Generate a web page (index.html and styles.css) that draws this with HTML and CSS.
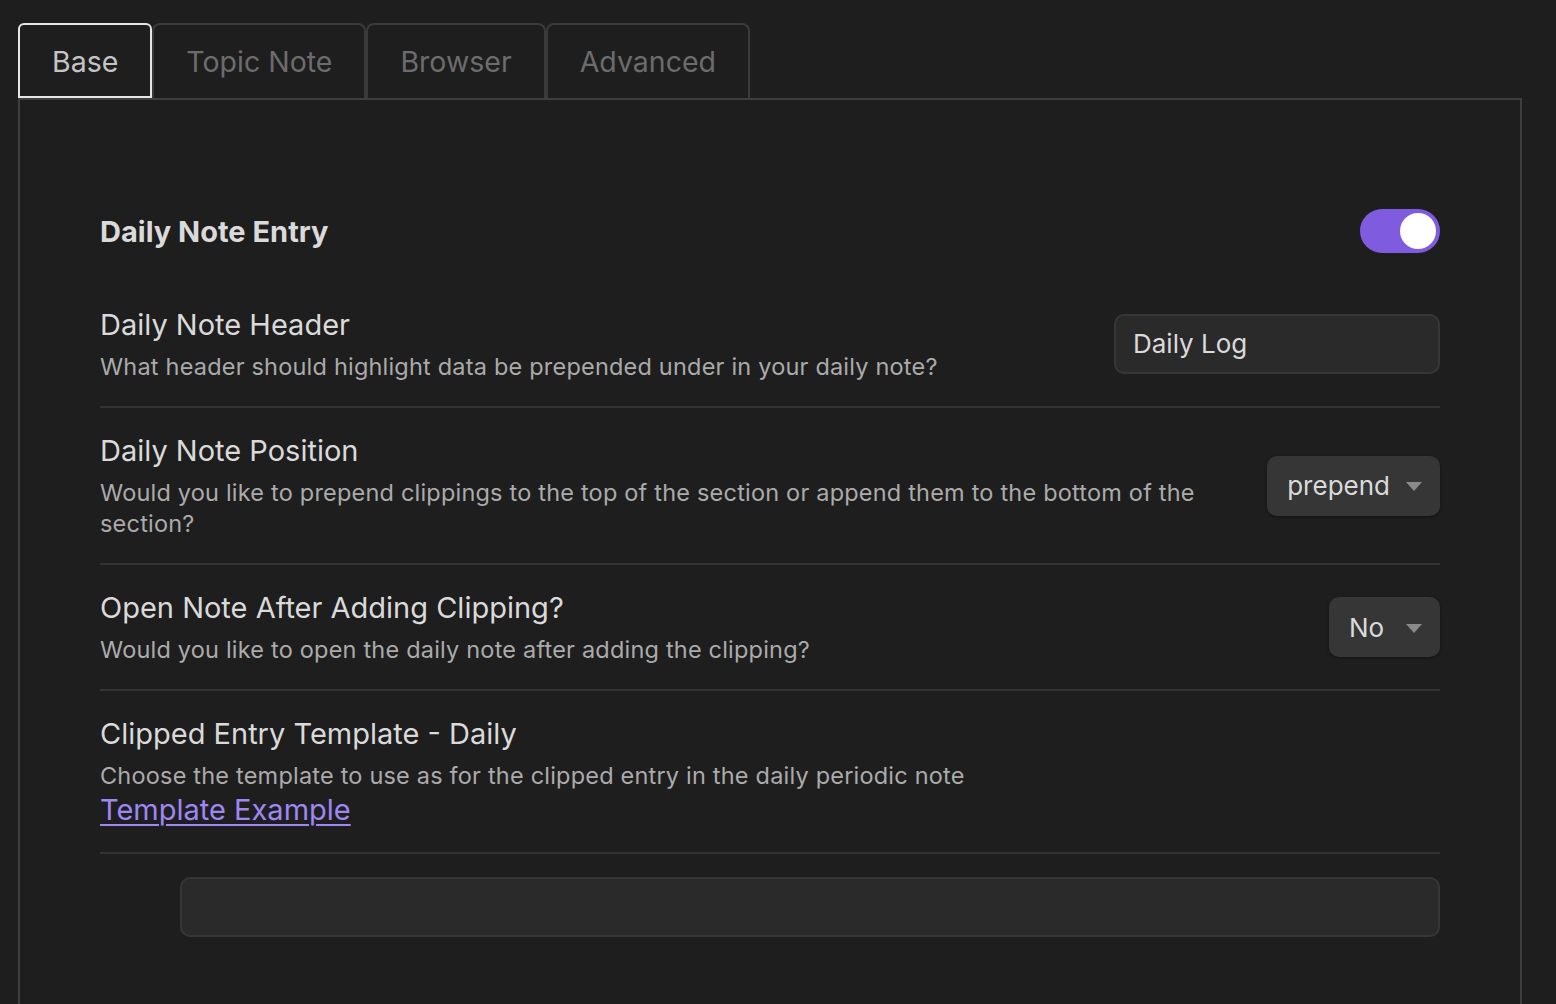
FILE: index.html
```html
<!DOCTYPE html>
<html>
<head>
<meta charset="utf-8">
<link rel="stylesheet" href="styles.css">
</head>
<body>
<div class="tabs">
  <div class="tab active">Base</div>
  <div class="tab">Topic Note</div>
  <div class="tab">Browser</div>
  <div class="tab">Advanced</div>
</div>
<div class="panel">
  <div class="heading">
    <div class="heading-name">Daily Note Entry</div>
    <div class="toggle"><div class="knob"></div></div>
  </div>
  <div class="item first">
    <div class="info">
      <div class="name">Daily Note Header</div>
      <div class="desc">What header should highlight data be prepended under in your daily note?</div>
    </div>
    <div class="input">Daily Log</div>
  </div>
  <div class="item">
    <div class="info">
      <div class="name">Daily Note Position</div>
      <div class="desc">Would you like to prepend clippings to the top of the section or append them to the bottom of the section?</div>
    </div>
    <div class="dropdown"><span class="value">prepend</span><span class="arrow"></span></div>
  </div>
  <div class="item">
    <div class="info">
      <div class="name">Open Note After Adding Clipping?</div>
      <div class="desc">Would you like to open the daily note after adding the clipping?</div>
    </div>
    <div class="dropdown"><span class="value short">No</span><span class="arrow"></span></div>
  </div>
  <div class="item">
    <div class="info">
      <div class="name">Clipped Entry Template - Daily</div>
      <div class="desc">Choose the template to use as for the clipped entry in the daily periodic note</div>
      <a class="link" href="#">Template Example</a>
    </div>
  </div>
  <div class="divider"></div>
  <div class="textarea-row"><div class="textarea"></div></div>
</div>
</body>
</html>
```
FILE: styles.css
```css
html, body {
  margin: 0;
  padding: 0;
  background: #1e1e1e;
  font-family: Inter, "Noto Sans", sans-serif;
  color: #dadada;
  overflow: hidden;
  height: 1004px;
}
.tabs {
  display: flex;
  align-items: flex-end;
  padding: 23px 0 0 18px;
  height: 98px;
  box-sizing: border-box;
}
.tab {
  height: 75px;
  box-sizing: border-box;
  border: 2px solid #3a3a3a;
  border-bottom: none;
  border-radius: 8px 8px 0 0;
  padding: 0 32px;
  font-size: 28.5px;
  line-height: 73px;
  color: #6c6c6c;
}
.tab.active {
  border: 2px solid #e6e6e6;
  border-radius: 6px 6px 0 0;
  color: #c4c4c4;
}
.panel {
  margin-left: 18px;
  width: 1504px;
  box-sizing: border-box;
  border: 2px solid #3e3e3e;
  border-bottom: none;
  height: 906px;
  padding: 109px 80px 0 80px;
}
.heading {
  display: flex;
  align-items: center;
  justify-content: space-between;
  height: 44px;
  margin-bottom: 29px;
}
.heading-name {
  font-size: 29px;
  font-weight: 700;
  color: #dadada;
}
.toggle {
  width: 80px;
  height: 44px;
  border-radius: 22px;
  background: #7f5be0;
  display: flex;
  align-items: center;
  justify-content: flex-end;
  padding: 0 4px;
  box-sizing: border-box;
}
.knob {
  width: 36px;
  height: 36px;
  border-radius: 50%;
  background: #ffffff;
}
.item {
  display: flex;
  align-items: center;
  gap: 64px;
  padding: 24px 0;
  border-top: 2px solid #333333;
}
.item.first {
  border-top: none;
}
.info {
  flex: 1;
  min-width: 0;
}
.name {
  font-size: 29px;
  line-height: 38px;
  color: #dadada;
}
.desc {
  font-size: 23.5px;
  line-height: 31px;
  margin-top: 7px;
  color: #ababab;
  letter-spacing: 0.2px;
}
.link {
  display: block;
  font-size: 29px;
  line-height: 37px;
  color: #9f86f2;
  text-decoration: underline;
  text-decoration-thickness: 2px;
  text-underline-offset: 4px;
  width: max-content;
}
.input {
  width: 326px;
  height: 60px;
  box-sizing: border-box;
  background: #2a2a2a;
  border: 2px solid #363636;
  border-radius: 10px;
  padding-left: 17px;
  font-size: 26px;
  line-height: 56px;
  color: #dadada;
}
.dropdown {
  height: 60px;
  box-sizing: border-box;
  background: #363636;
  border-radius: 10px;
  box-shadow: 0 1px 3px rgba(0, 0, 0, 0.4);
  display: flex;
  align-items: center;
  gap: 16px;
  padding: 0 18px 0 20px;
  font-size: 26px;
  color: #dadada;
}
.value.short {
  min-width: 41px;
}
.arrow {
  width: 0;
  height: 0;
  border-left: 8px solid transparent;
  border-right: 8px solid transparent;
  border-top: 9px solid #8a8a8a;
  margin-top: 2px;
}
.divider {
  border-top: 2px solid #333333;
}
.textarea-row {
  display: flex;
  justify-content: flex-end;
  padding-top: 23px;
}
.textarea {
  width: 1260px;
  height: 60px;
  box-sizing: border-box;
  background: #2a2a2a;
  border: 2px solid #363636;
  border-radius: 10px;
}
```
